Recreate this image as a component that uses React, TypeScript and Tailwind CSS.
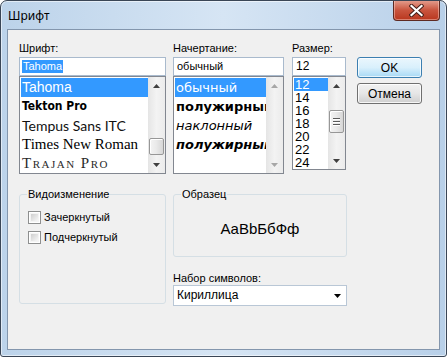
import React from "react";

function Arrow({ dir, color }: { dir: "up" | "down"; color: string }) {
  return (
    <svg width="7" height="4" viewBox="0 0 7 4">
      {dir === "up" ? <path d="M3.5 0L7 4H0Z" fill={color} /> : <path d="M0 0H7L3.5 4Z" fill={color} />}
    </svg>
  );
}

function Scroll({ thumb, disabled, grip }: { thumb?: string; disabled?: boolean; grip?: boolean }) {
  const c = disabled ? "#a7a7a7" : "#3f3f3f";
  return (
    <div className="w-[17px] h-full shrink-0 flex flex-col bg-gradient-to-r from-[#e5e5e5] via-[#f3f3f3] to-[#ebebeb]">
      <div className="h-[17px] shrink-0 flex items-center justify-center">
        <Arrow dir="up" color={c} />
      </div>
      <div className="flex-1 flex flex-col">
        {thumb && (
          <div
            className={`${thumb} mx-[1px] rounded-[2px] border border-[#979797] bg-gradient-to-r from-[#f4f4f4] via-[#e9e9e9] to-[#d6d6d6] shadow-[inset_1px_1px_0_#ffffff] flex flex-col items-center justify-center gap-[2px]`}
          >
            {grip && (
              <>
                <div className="w-[7px] h-[1px] bg-[#5a5a5a] shadow-[0_1px_0_#ffffff]" />
                <div className="w-[7px] h-[1px] bg-[#5a5a5a] shadow-[0_1px_0_#ffffff]" />
                <div className="w-[7px] h-[1px] bg-[#5a5a5a] shadow-[0_1px_0_#ffffff]" />
              </>
            )}
          </div>
        )}
      </div>
      <div className="h-[17px] shrink-0 flex items-center justify-center">
        <Arrow dir="down" color={c} />
      </div>
    </div>
  );
}

function CheckBox({ label }: { label: string }) {
  return (
    <div className="flex items-center h-[13px]">
      <div className="w-[13px] h-[13px] border border-[#8e8f8f] bg-white p-[1px]">
        <div className="w-full h-full border border-[#f4f4f4] bg-gradient-to-br from-[#cfcfcf] to-[#f7f7f7]" />
      </div>
      <span className="ml-[3px] leading-[13px]">{label}</span>
    </div>
  );
}

export default function App() {
  return (
    <div className="w-[447px] h-[357px] flex flex-col overflow-hidden rounded-tl-[7px] rounded-tr-[7px] rounded-bl-[3px] rounded-br-[3px] border border-[#3a4656] bg-gradient-to-r from-[#bcd3ea] via-[#d6e5f4] to-[#b8d0e9] shadow-[inset_0_0_0_1px_rgba(255,255,255,0.55)] font-['Liberation_Sans',sans-serif] text-[11px] text-black">
      {/* Title bar */}
      <div className="h-[28px] shrink-0 flex items-start pl-[7px]">
        <span className="mt-[7px] text-[12px] leading-[16px] font-['Noto_Sans',sans-serif] text-black">Шрифт</span>
        <div className="ml-auto mr-[6px] -mt-[1px] w-[47px] h-[21px] rounded-b-[4px] border border-[#5e2a22] border-t-0 bg-gradient-to-b from-[#e4a192] via-[#c9553f] to-[#b9361d] shadow-[inset_0_0_0_1px_rgba(255,220,210,0.45)] flex items-center justify-center">
          <svg width="15" height="13" viewBox="0 0 15 13">
            <path d="M2.5 2L12.5 11M12.5 2L2.5 11" stroke="#46201a" strokeWidth="4.2" strokeLinecap="square" />
            <path d="M2.5 2L12.5 11M12.5 2L2.5 11" stroke="#ffffff" strokeWidth="2.2" strokeLinecap="square" />
          </svg>
        </div>
      </div>

      {/* Client area */}
      <div className="flex-1 mx-[6px] mb-[6px] border border-[#8396ad] bg-[#f0f0f0] pl-[11px] pt-[12px] flex flex-col">
        {/* Top row */}
        <div className="flex items-start">
          {/* Font */}
          <div className="w-[147px] flex flex-col">
            <div className="h-[13px] leading-[13px]">Шрифт:</div>
            <div className="mt-[2px] h-[19px] border border-[#a9bacd] bg-white flex items-center pl-[2px]">
              <span className="bg-[#3399ff] text-white leading-[13px] px-[1px]">Tahoma</span>
            </div>
            <div className="h-[98px] border border-[#828790] bg-white flex overflow-hidden">
              <div className="flex-1 pl-[1px] pt-[1px] overflow-hidden whitespace-nowrap">
                <div className="h-[19px] bg-[#3399ff] text-white text-[14px] leading-[19px] pl-[1px] font-['Liberation_Sans',sans-serif]">Tahoma</div>
                <div className="h-[19px] text-[12px] leading-[19px] pl-[1px] font-['DejaVu_Sans_Condensed','DejaVu_Sans',sans-serif] font-bold">Tekton Pro</div>
                <div className="h-[19px] text-[14px] leading-[19px] pl-[1px] font-['Lato',sans-serif] font-normal text-[#111]">Tempus Sans ITC</div>
                <div className="h-[19px] text-[15px] leading-[19px] pl-[1px] font-['Liberation_Serif',serif]">Times New Roman</div>
                <div className="h-[19px] text-[15px] leading-[19px] pl-[1px] font-['Liberation_Serif',serif] [font-variant:small-caps] tracking-[1.5px] text-[#2a2a2a]">Trajan Pro</div>
              </div>
              <Scroll thumb="mt-[44px] h-[17px]" />
            </div>
          </div>

          {/* Style */}
          <div className="ml-[7px] w-[111px] flex flex-col">
            <div className="h-[13px] leading-[13px]">Начертание:</div>
            <div className="mt-[2px] h-[19px] border border-[#a9bacd] bg-white flex items-center pl-[3px]">
              <span className="leading-[13px]">обычный</span>
            </div>
            <div className="h-[98px] border border-[#828790] bg-white flex overflow-hidden">
              <div className="flex-1 pl-[1px] pt-[1px] overflow-hidden whitespace-nowrap font-['DejaVu_Sans',sans-serif]">
                <div className="h-[19px] bg-[#3399ff] text-white text-[13px] leading-[19px] pl-[1px]">обычный</div>
                <div className="h-[19px] text-[13px] leading-[19px] pl-[1px] font-bold">полужирный</div>
                <div className="h-[19px] text-[13px] leading-[19px] pl-[1px] italic">наклонный</div>
                <div className="h-[19px] text-[13px] leading-[19px] pl-[1px] font-bold italic">полужирный</div>
              </div>
              <Scroll disabled />
            </div>
          </div>

          {/* Size */}
          <div className="ml-[8px] w-[54px] flex flex-col">
            <div className="h-[13px] leading-[13px]">Размер:</div>
            <div className="mt-[2px] h-[19px] border border-[#a9bacd] bg-white flex items-center pl-[3px]">
              <span className="text-[12px] leading-[13px]">12</span>
            </div>
            <div className="h-[94px] border border-[#828790] bg-white flex overflow-hidden">
              <div className="flex-1 pl-[1px] pt-[1px] overflow-hidden">
                <div className="h-[13px] bg-[#3399ff] text-white text-[13px] leading-[13px] pl-[1px]">12</div>
                <div className="h-[13px] text-[13px] leading-[13px] pl-[1px]">14</div>
                <div className="h-[13px] text-[13px] leading-[13px] pl-[1px]">16</div>
                <div className="h-[13px] text-[13px] leading-[13px] pl-[1px]">18</div>
                <div className="h-[13px] text-[13px] leading-[13px] pl-[1px]">20</div>
                <div className="h-[13px] text-[13px] leading-[13px] pl-[1px]">22</div>
                <div className="h-[13px] text-[13px] leading-[13px] pl-[1px]">24</div>
              </div>
              <Scroll thumb="mt-[16px] h-[23px]" grip />
            </div>
          </div>

          {/* Buttons */}
          <div className="ml-[11px] mt-[15px] w-[65px] flex flex-col">
            <div className="h-[21px] rounded-[3px] border border-[#3c7fb1] bg-gradient-to-b from-[#eaf6fd] via-[#d9f0fc] to-[#a7d9f5] shadow-[inset_0_0_0_1px_rgba(255,255,255,0.7)] flex items-center justify-center text-[12px]">
              OK
            </div>
            <div className="mt-[5px] h-[21px] rounded-[3px] border border-[#707070] bg-gradient-to-b from-[#f2f2f2] via-[#e6e6e6] to-[#cfcfcf] shadow-[inset_0_0_0_1px_rgba(255,255,255,0.8)] flex items-center justify-center text-[12px]">
              Отмена
            </div>
          </div>
        </div>

        {/* Bottom row */}
        <div className="mt-[20px] flex items-start">
          <div className="relative w-[147px] h-[110px] rounded-[3px] border border-[#d5dfe5] pl-[8px] pt-[16px] flex flex-col gap-[7px]">
            <span className="absolute left-[7px] top-[-7px] px-[1px] leading-[13px] bg-[#f0f0f0]">Видоизменение</span>
            <CheckBox label="Зачеркнутый" />
            <CheckBox label="Подчеркнутый" />
          </div>

          <div className="ml-[7px] w-[174px] flex flex-col">
            <div className="relative h-[63px] rounded-[3px] border border-[#d5dfe5] flex items-center justify-center pt-[6px]">
              <span className="absolute left-[7px] top-[-7px] px-[1px] leading-[13px] bg-[#f0f0f0]">Образец</span>
              <span className="text-[15px] leading-[18px] font-['Liberation_Sans',sans-serif]">AaBbБбФф</span>
            </div>
            <div className="mt-[15px] h-[13px] leading-[13px]">Набор символов:</div>
            <div className="h-[21px] border border-[#b9c7d6] bg-white flex items-center pl-[3px] pr-[3px]">
              <span className="flex-1 text-[12px] leading-[13px]">Кириллица</span>
              <svg width="7" height="4" viewBox="0 0 7 4" className="mr-[2px]">
                <path d="M0 0H7L3.5 4Z" fill="#000" />
              </svg>
            </div>
          </div>
        </div>
      </div>
    </div>
  );
}
